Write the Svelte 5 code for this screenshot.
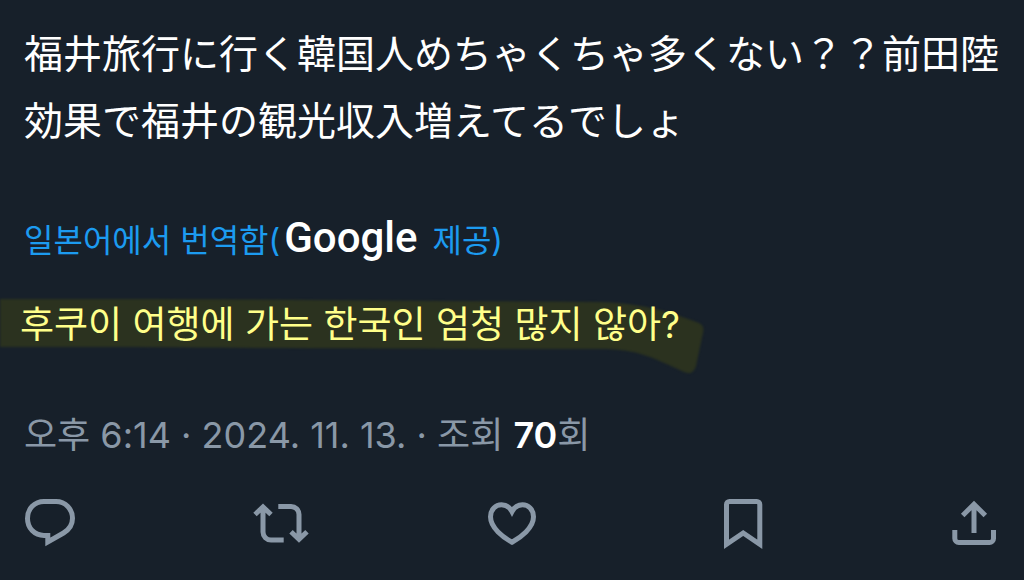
<script>
  const original = "福井旅行に行く韓国人めちゃくちゃ多くない？？前田陸効果で福井の観光収入増えてるでしょ";
  const translated = "후쿠이 여행에 가는 한국인 엄청 많지 않아?";
  const views = 70;

  const actions = [
    {
      label: "답글",
      paths: ["M24 6.5h12c9.5 0 16.5 7.5 16.5 16.8 0 6.5-3.5 11.5-9 14.7L27.8 47v-6.6H24C14.5 40.4 7.5 33 7.5 23.4S14.5 6.5 24 6.5z"],
    },
    {
      label: "재게시",
      paths: [
        "M4 19.5l8-7.5 8 7.5M12 12v25a8 8 0 0 0 8 8h12.7",
        "M27.3 11.5H40a8 8 0 0 1 8 8V44M40 36.7l8 7.5 8-7.5",
      ],
    },
    {
      label: "마음에 들어요",
      paths: ["M30 47.2C21.5 42.6 8.5 33 8.5 21.8c0-7.5 5.3-12 11-12 4.7 0 8.3 2.6 10.5 6.8 2.2-4.2 5.8-6.8 10.5-6.8 5.7 0 11 4.5 11 12C51.5 33 38.5 42.6 30 47.2z"],
    },
    {
      label: "북마크",
      paths: ["M13.5 49.3V9.5a3 3 0 0 1 3-3h27.3a3 3 0 0 1 3 3v39.8L30.2 38z"],
    },
    {
      label: "공유",
      paths: ["M30 38V9.5M18.7 20.5L30 9.2l11.3 11.3", "M10.8 35v8.5a4 4 0 0 0 4 4h30.7a4 4 0 0 0 4-4V35"],
    },
  ];
</script>

<article class="post">
  <p class="original" lang="ja">{original}</p>

  <a class="source" href="#translate" lang="ko">일본어에서 번역함(<span class="google">Google</span> 제공)</a>

  <div class="translation" lang="ko">
    <svg class="marker" viewBox="0 0 720 90" aria-hidden="true">
      <path d="M-10 8H100C250 8 450 10 600 11C640 12 668 20 699 32Q705 35 703 42L696 75Q693 85 684 81C655 68 640 58 600 58C450 58 250 57 100 56H-10z" />
    </svg>
    <p>{translated}</p>
  </div>

  <p class="meta" lang="ko">
    <time datetime="2024-11-13T18:14">오후 6:14 · 2024. 11. 13.</time> · 조회 <strong>{views}</strong>회
  </p>

  <div class="actions">
    {#each actions as action}
      <button type="button" aria-label={action.label}>
        <svg viewBox="0 0 60 60">
          {#each action.paths as d}
            <path {d} />
          {/each}
        </svg>
      </button>
    {/each}
  </div>
</article>

<style>
  :global(body) {
    background-color: #17202a;
  }

  .post {
    padding: 18px 20px;
    color: #fff;
    font-family: Inter, "Noto Sans CJK KR", sans-serif;
  }

  p {
    margin: 0;
  }

  .original {
    padding-left: 4px;
    font-family: "Noto Sans CJK JP", sans-serif;
    font-size: 39px;
    line-height: 67px;
  }

  .source {
    display: block;
    margin-top: 65px;
    padding-left: 4px;
    color: #1c9bf0;
    font-size: 32px;
    line-height: 48px;
    text-decoration: none;
    white-space: nowrap;
  }

  .google {
    margin: 0 6px 0 4px;
    color: #fff;
    font-family: Roboto, sans-serif;
    font-size: 42px;
    font-weight: 500;
    line-height: 40px;
  }

  .translation {
    position: relative;
    margin-top: 35px;
    color: #ffff8a;
    font-size: 37px;
    line-height: 50px;
  }

  .translation p {
    position: relative;
  }

  /* marker stroke runs off the left edge of the screen */
  .marker {
    position: absolute;
    top: -9px;
    left: -20px;
    width: 720px;
    height: 90px;
    fill: #2b321f;
    filter: blur(1px);
  }

  .meta {
    margin-top: 63px;
    padding-left: 4px;
    color: #8a98a7;
    font-size: 36px;
    line-height: 44px;
  }

  .meta strong {
    color: #fff;
    font-weight: 600;
  }

  .actions {
    display: flex;
    justify-content: space-between;
    margin-top: 38px;
  }

  button {
    width: 60px;
    height: 60px;
    padding: 0;
    border: 0;
    background: none;
    color: #8a98a7;
    cursor: pointer;
  }

  button svg {
    display: block;
    width: 60px;
    height: 60px;
    fill: none;
    stroke: currentColor;
    stroke-width: 5;
  }
</style>
